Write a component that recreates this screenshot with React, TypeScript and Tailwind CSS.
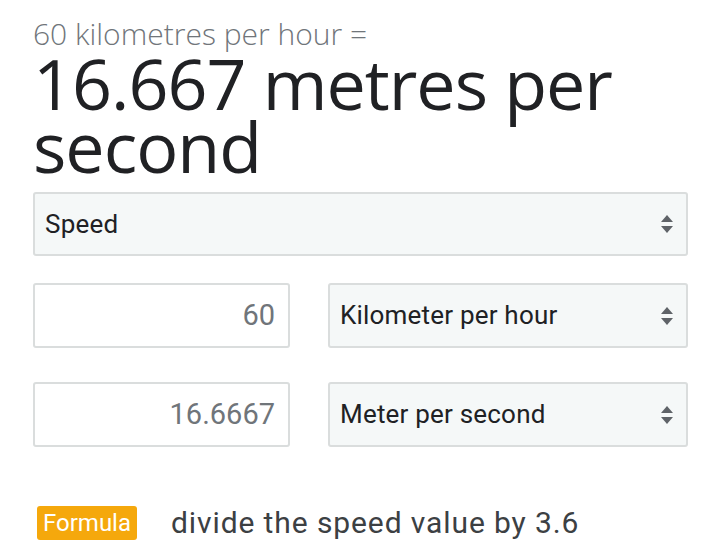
const Arrows = () => (
    <svg width="14" height="22" viewBox="0 0 14 22" className="shrink-0">
        <path d="M7 2 L13 9 L1 9 Z" fill="#5f6368" />
        <path d="M7 20 L13 13 L1 13 Z" fill="#5f6368" />
    </svg>
);

const Select = ({ label, className }: { label: string; className: string }) => (
    <div className={`flex items-center justify-between bg-[#f5f8f8] border-2 border-[#dadddd] rounded-[3px] pl-[10px] pr-[12px] ${className}`}>
        <span className="text-[26px] text-[#202124] tracking-[0.2px]">{label}</span>
        <Arrows />
    </div>
);

const NumberBox = ({ value }: { value: string }) => (
    <div className="w-[257px] h-[65px] flex items-center justify-end bg-white border-2 border-[#dadddd] rounded-[3px] pr-[13px]">
        <span className="text-[29px] text-[#70757a]">{value}</span>
    </div>
);

export default function App() {
    return (
        <div className="w-[720px] h-[553px] bg-white overflow-hidden pl-[33px] pt-[16px] font-['Roboto',sans-serif]">
            <div className="font-['Open_Sans',sans-serif] text-[30px] leading-[36px] text-[#70757a] font-light">60 kilometres per hour =</div>
            <div className="font-['Open_Sans',sans-serif] text-[70px] leading-[63px] text-[#202124] w-[670px] tracking-[-1px]">16.667 metres per second</div>
            <Select label="Speed" className="w-[655px] h-[64px] mt-[14px]" />
            <div className="flex gap-[38px] mt-[27px]">
                <NumberBox value="60" />
                <Select label="Kilometer per hour" className="w-[360px] h-[65px]" />
            </div>
            <div className="flex gap-[38px] mt-[34px]">
                <NumberBox value="16.6667" />
                <Select label="Meter per second" className="w-[360px] h-[65px]" />
            </div>
            <div className="flex items-center gap-[34px] mt-[53px] ml-[4px]">
                <span className="bg-[#f5a80c] text-white text-[24px] leading-[34px] px-[6px] rounded-[3px]">Formula</span>
                <span className="text-[30px] text-[#3c4043] tracking-[0.9px]">divide the speed value by 3.6</span>
            </div>
        </div>
    );
}
